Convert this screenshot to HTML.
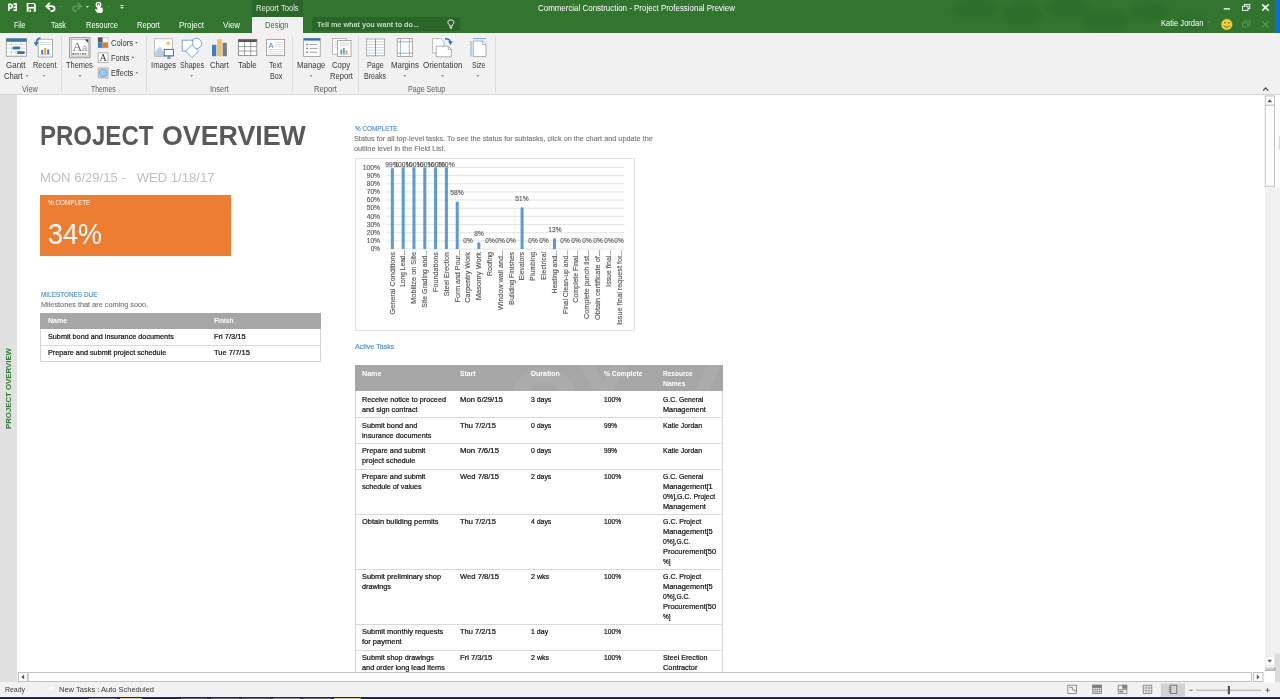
<!DOCTYPE html>
<html lang="en">
<head>
<meta charset="utf-8">
<title>Commercial Construction - Project Professional Preview</title>
<style>
html,body{margin:0;padding:0;background:#fff;}
body{width:1280px;height:699px;overflow:hidden;font-family:"Liberation Sans",sans-serif;}
#app{position:relative;width:1280px;height:699px;overflow:hidden;background:#fff;}
.t{position:absolute;white-space:nowrap;line-height:1;font-family:"Liberation Sans",sans-serif;}
.pre{white-space:pre;}
.ct{-webkit-text-stroke:0.22px #141414;}
.abs{position:absolute;}
#titlebar{position:absolute;left:0;top:0;width:1280px;height:32.5px;background:#31752f;}
#ctxtab{position:absolute;left:251.8px;top:0;width:51px;height:16.5px;background:#2a682a;}
#designtab{position:absolute;left:251.8px;top:16.5px;width:51px;height:16.5px;background:#f1f1f1;}
#tellme{position:absolute;left:312.2px;top:16.5px;width:147.5px;height:14.6px;background:#2a6529;}
#bluestrip{position:absolute;left:1275px;top:0;width:5px;height:32.5px;background:#0a6fd6;}
#ribbon{position:absolute;left:0;top:32.5px;width:1280px;height:61.5px;background:#f1f1f1;border-bottom:1px solid #d6d6d6;}
.sep{position:absolute;top:36px;width:1px;height:56px;background:#dcdcdc;}
#content{position:absolute;left:0;top:95px;width:1280px;height:577px;background:#fff;overflow:hidden;}
#sidebar{position:absolute;left:0;top:95px;width:16.7px;height:587.5px;background:#e1e1e1;}
#clip{position:absolute;left:0;top:0;width:1280px;height:672px;overflow:hidden;}
#vscroll{position:absolute;left:1264.6px;top:95px;width:15.4px;height:577px;background:#f1f1f1;}
#hscroll{position:absolute;left:16.7px;top:671.6px;width:1248px;height:10.8px;background:#f4f4f4;}
#status{position:absolute;left:0;top:682.4px;width:1280px;height:14.4px;background:#f1f1f1;}
#taskbar{position:absolute;left:0;top:696.6px;width:1280px;height:2.4px;background:#262449;}
#taskbar i{position:absolute;top:1.4px;height:1px;display:block;}
#orange{position:absolute;left:40.2px;top:194.5px;width:190.5px;height:61.5px;background:#ed7d31;}
.thead{position:absolute;background:#a6a6a6;}
.tbox{position:absolute;border:1px solid #d4d4d4;box-sizing:border-box;background:#fff;}
.hl{position:absolute;height:1px;background:#d9d9d9;}
#chartbox{position:absolute;left:355px;top:158px;width:280px;height:173px;border:1px solid #e0e0e0;box-sizing:border-box;background:#fff;}
.tl{position:absolute;left:0;top:0;width:1280px;height:699px;will-change:transform;}
svg{position:absolute;left:0;top:0;overflow:visible;}
</style>
</head>
<body>
<div id="app">
 <div id="clip">
 <!-- ===== report page ===== -->
 <div id="content"></div>
 <div id="orange"></div>
 <!-- milestones table -->
 <div class="tbox" style="left:40px;top:313px;width:281px;height:49px;"></div>
 <div class="thead" style="left:40px;top:313px;width:281px;height:15.7px;"></div>
 <div class="hl" style="left:40px;top:344.5px;width:281px;"></div>
 <!-- chart -->
 <div id="chartbox"></div>
 <!-- active tasks table -->
 <div class="tbox" style="left:355px;top:365px;width:368px;height:320px;"></div>
 <div class="thead" style="left:355px;top:365px;width:368px;height:26.2px;"></div>
 <div class="hl" style="left:355px;top:417.3px;width:368px;"></div>
 <div class="hl" style="left:355px;top:443px;width:368px;"></div>
 <div class="hl" style="left:355px;top:468.6px;width:368px;"></div>
 <div class="hl" style="left:355px;top:514px;width:368px;"></div>
 <div class="hl" style="left:355px;top:569px;width:368px;"></div>
 <div class="hl" style="left:355px;top:624px;width:368px;"></div>
 <div class="hl" style="left:355px;top:649.6px;width:368px;"></div>
 <svg width="1280" height="699" viewBox="0 0 1280 699" id="chartsvg">
<line x1="386.6" x2="624.6" y1="249.00" y2="249.00" stroke="#d9d9d9" stroke-width="0.7"/>
<line x1="386.6" x2="624.6" y1="240.84" y2="240.84" stroke="#d9d9d9" stroke-width="0.7"/>
<line x1="386.6" x2="624.6" y1="232.68" y2="232.68" stroke="#d9d9d9" stroke-width="0.7"/>
<line x1="386.6" x2="624.6" y1="224.52" y2="224.52" stroke="#d9d9d9" stroke-width="0.7"/>
<line x1="386.6" x2="624.6" y1="216.36" y2="216.36" stroke="#d9d9d9" stroke-width="0.7"/>
<line x1="386.6" x2="624.6" y1="208.20" y2="208.20" stroke="#d9d9d9" stroke-width="0.7"/>
<line x1="386.6" x2="624.6" y1="200.04" y2="200.04" stroke="#d9d9d9" stroke-width="0.7"/>
<line x1="386.6" x2="624.6" y1="191.88" y2="191.88" stroke="#d9d9d9" stroke-width="0.7"/>
<line x1="386.6" x2="624.6" y1="183.72" y2="183.72" stroke="#d9d9d9" stroke-width="0.7"/>
<line x1="386.6" x2="624.6" y1="175.56" y2="175.56" stroke="#d9d9d9" stroke-width="0.7"/>
<line x1="386.6" x2="624.6" y1="167.40" y2="167.40" stroke="#d9d9d9" stroke-width="0.7"/>
<rect x="390.85" y="168.22" width="3.0" height="80.78" fill="#5b9bd5"/>
<rect x="401.66" y="167.40" width="3.0" height="81.60" fill="#5b9bd5"/>
<rect x="412.47" y="167.40" width="3.0" height="81.60" fill="#5b9bd5"/>
<rect x="423.28" y="167.40" width="3.0" height="81.60" fill="#5b9bd5"/>
<rect x="434.09" y="167.40" width="3.0" height="81.60" fill="#5b9bd5"/>
<rect x="444.90" y="167.40" width="3.0" height="81.60" fill="#5b9bd5"/>
<rect x="455.71" y="201.67" width="3.0" height="47.33" fill="#5b9bd5"/>
<rect x="477.33" y="242.47" width="3.0" height="6.53" fill="#5b9bd5"/>
<rect x="520.57" y="207.38" width="3.0" height="41.62" fill="#5b9bd5"/>
<rect x="553.00" y="238.39" width="3.0" height="10.61" fill="#5b9bd5"/>
 <defs><clipPath id="wmclip"><rect x="355" y="365" width="368" height="26.2"/></clipPath></defs>
 <g clip-path="url(#wmclip)" fill="none" stroke="#ffffff" stroke-opacity="0.06">
  <circle cx="544" cy="401" r="26" stroke-width="15"/>
  <path d="M585 360 L603 396 L622 360" stroke-width="13"/>
  <path d="M700 396 L716 360" stroke-width="13"/>
 </g>
 </svg>
 <div class="tl">
<span class="t ct" id="t60" style="font-size:7.2px;color:#141414;left:361.70px;top:396.00px;transform-origin:0 50%;transform:scaleX(1.0107);">Receive notice to proceed</span>
<span class="t ct" id="t61" style="font-size:7.2px;color:#141414;left:361.70px;top:406.00px;transform-origin:0 50%;transform:scaleX(1.0155);">and sign contract</span>
<span class="t ct" id="t62" style="font-size:7.2px;color:#141414;left:459.90px;top:396.00px;transform-origin:0 50%;transform:scaleX(1.0708);">Mon 6/29/15</span>
<span class="t ct" id="t63" style="font-size:7.2px;color:#141414;left:531.30px;top:396.00px;transform-origin:0 50%;transform:scaleX(0.9581);">3 days</span>
<span class="t ct" id="t64" style="font-size:7.2px;color:#141414;left:604.00px;top:396.00px;transform-origin:0 50%;transform:scaleX(0.9353);">100%</span>
<span class="t ct" id="t65" style="font-size:7.2px;color:#141414;left:662.80px;top:396.00px;transform-origin:0 50%;transform:scaleX(0.9517);">G.C. General</span>
<span class="t ct" id="t66" style="font-size:7.2px;color:#141414;left:662.80px;top:406.00px;transform-origin:0 50%;transform:scaleX(1.0202);">Management</span>
<span class="t ct" id="t67" style="font-size:7.2px;color:#141414;left:361.70px;top:422.00px;transform-origin:0 50%;transform:scaleX(1.0173);">Submit bond and</span>
<span class="t ct" id="t68" style="font-size:7.2px;color:#141414;left:361.70px;top:432.00px;transform-origin:0 50%;transform:scaleX(1.0157);">insurance documents</span>
<span class="t ct" id="t69" style="font-size:7.2px;color:#141414;left:459.90px;top:422.00px;transform-origin:0 50%;transform:scaleX(1.0444);">Thu 7/2/15</span>
<span class="t ct" id="t70" style="font-size:7.2px;color:#141414;left:531.30px;top:422.00px;transform-origin:0 50%;transform:scaleX(0.9581);">0 days</span>
<span class="t ct" id="t71" style="font-size:7.2px;color:#141414;left:604.00px;top:422.00px;transform-origin:0 50%;transform:scaleX(0.9103);">99%</span>
<span class="t ct" id="t72" style="font-size:7.2px;color:#141414;left:662.80px;top:422.00px;transform-origin:0 50%;transform:scaleX(0.9663);">Katie Jordan</span>
<span class="t ct" id="t73" style="font-size:7.2px;color:#141414;left:361.70px;top:447.00px;transform-origin:0 50%;transform:scaleX(1.0106);">Prepare and submit</span>
<span class="t ct" id="t74" style="font-size:7.2px;color:#141414;left:361.70px;top:457.00px;transform-origin:0 50%;transform:scaleX(1.0202);">project schedule</span>
<span class="t ct" id="t75" style="font-size:7.2px;color:#141414;left:459.90px;top:447.00px;transform-origin:0 50%;transform:scaleX(1.0843);">Mon 7/6/15</span>
<span class="t ct" id="t76" style="font-size:7.2px;color:#141414;left:531.30px;top:447.00px;transform-origin:0 50%;transform:scaleX(0.9581);">0 days</span>
<span class="t ct" id="t77" style="font-size:7.2px;color:#141414;left:604.00px;top:447.00px;transform-origin:0 50%;transform:scaleX(0.9103);">99%</span>
<span class="t ct" id="t78" style="font-size:7.2px;color:#141414;left:662.80px;top:447.00px;transform-origin:0 50%;transform:scaleX(0.9663);">Katie Jordan</span>
<span class="t ct" id="t79" style="font-size:7.2px;color:#141414;left:361.70px;top:473.00px;transform-origin:0 50%;transform:scaleX(1.0106);">Prepare and submit</span>
<span class="t ct" id="t80" style="font-size:7.2px;color:#141414;left:361.70px;top:483.00px;transform-origin:0 50%;transform:scaleX(1.0026);">schedule of values</span>
<span class="t ct" id="t81" style="font-size:7.2px;color:#141414;left:459.90px;top:473.00px;transform-origin:0 50%;transform:scaleX(1.0644);">Wed 7/8/15</span>
<span class="t ct" id="t82" style="font-size:7.2px;color:#141414;left:531.30px;top:473.00px;transform-origin:0 50%;transform:scaleX(0.9581);">2 days</span>
<span class="t ct" id="t83" style="font-size:7.2px;color:#141414;left:604.00px;top:473.00px;transform-origin:0 50%;transform:scaleX(0.9353);">100%</span>
<span class="t ct" id="t84" style="font-size:7.2px;color:#141414;left:662.80px;top:473.00px;transform-origin:0 50%;transform:scaleX(0.9517);">G.C. General</span>
<span class="t ct" id="t85" style="font-size:7.2px;color:#141414;left:662.80px;top:483.00px;transform-origin:0 50%;transform:scaleX(1.0364);">Management[1</span>
<span class="t ct" id="t86" style="font-size:7.2px;color:#141414;left:662.80px;top:493.00px;transform-origin:0 50%;transform:scaleX(0.9751);">0%],G.C. Project</span>
<span class="t ct" id="t87" style="font-size:7.2px;color:#141414;left:662.80px;top:503.00px;transform-origin:0 50%;transform:scaleX(1.0202);">Management</span>
<span class="t ct" id="t88" style="font-size:7.2px;color:#141414;left:361.70px;top:518.00px;transform-origin:0 50%;transform:scaleX(1.0420);">Obtain building permits</span>
<span class="t ct" id="t89" style="font-size:7.2px;color:#141414;left:459.90px;top:518.00px;transform-origin:0 50%;transform:scaleX(1.0444);">Thu 7/2/15</span>
<span class="t ct" id="t90" style="font-size:7.2px;color:#141414;left:531.30px;top:518.00px;transform-origin:0 50%;transform:scaleX(0.9581);">4 days</span>
<span class="t ct" id="t91" style="font-size:7.2px;color:#141414;left:604.00px;top:518.00px;transform-origin:0 50%;transform:scaleX(0.9353);">100%</span>
<span class="t ct" id="t92" style="font-size:7.2px;color:#141414;left:662.80px;top:518.00px;transform-origin:0 50%;transform:scaleX(0.9730);">G.C. Project</span>
<span class="t ct" id="t93" style="font-size:7.2px;color:#141414;left:662.80px;top:528.00px;transform-origin:0 50%;transform:scaleX(1.0364);">Management[5</span>
<span class="t ct" id="t94" style="font-size:7.2px;color:#141414;left:662.80px;top:538.00px;transform-origin:0 50%;transform:scaleX(0.9324);">0%],G.C.</span>
<span class="t ct" id="t95" style="font-size:7.2px;color:#141414;left:662.80px;top:548.00px;transform-origin:0 50%;transform:scaleX(1.0383);">Procurement[50</span>
<span class="t ct" id="t96" style="font-size:7.2px;color:#141414;left:662.80px;top:558.00px;transform-origin:0 50%;transform:scaleX(0.8939);">%]</span>
<span class="t ct" id="t97" style="font-size:7.2px;color:#141414;left:361.70px;top:573.00px;transform-origin:0 50%;transform:scaleX(1.0245);">Submit preliminary shop</span>
<span class="t ct" id="t98" style="font-size:7.2px;color:#141414;left:361.70px;top:583.00px;transform-origin:0 50%;transform:scaleX(1.0081);">drawings</span>
<span class="t ct" id="t99" style="font-size:7.2px;color:#141414;left:459.90px;top:573.00px;transform-origin:0 50%;transform:scaleX(1.0644);">Wed 7/8/15</span>
<span class="t ct" id="t100" style="font-size:7.2px;color:#141414;left:531.30px;top:573.00px;transform-origin:0 50%;transform:scaleX(0.9850);">2 wks</span>
<span class="t ct" id="t101" style="font-size:7.2px;color:#141414;left:604.00px;top:573.00px;transform-origin:0 50%;transform:scaleX(0.9353);">100%</span>
<span class="t ct" id="t102" style="font-size:7.2px;color:#141414;left:662.80px;top:573.00px;transform-origin:0 50%;transform:scaleX(0.9730);">G.C. Project</span>
<span class="t ct" id="t103" style="font-size:7.2px;color:#141414;left:662.80px;top:583.00px;transform-origin:0 50%;transform:scaleX(1.0364);">Management[5</span>
<span class="t ct" id="t104" style="font-size:7.2px;color:#141414;left:662.80px;top:593.00px;transform-origin:0 50%;transform:scaleX(0.9324);">0%],G.C.</span>
<span class="t ct" id="t105" style="font-size:7.2px;color:#141414;left:662.80px;top:603.00px;transform-origin:0 50%;transform:scaleX(1.0383);">Procurement[50</span>
<span class="t ct" id="t106" style="font-size:7.2px;color:#141414;left:662.80px;top:613.00px;transform-origin:0 50%;transform:scaleX(0.8939);">%]</span>
<span class="t ct" id="t107" style="font-size:7.2px;color:#141414;left:361.70px;top:628.00px;transform-origin:0 50%;transform:scaleX(1.0271);">Submit monthly requests</span>
<span class="t ct" id="t108" style="font-size:7.2px;color:#141414;left:361.70px;top:638.00px;transform-origin:0 50%;transform:scaleX(1.0460);">for payment</span>
<span class="t ct" id="t109" style="font-size:7.2px;color:#141414;left:459.90px;top:628.00px;transform-origin:0 50%;transform:scaleX(1.0444);">Thu 7/2/15</span>
<span class="t ct" id="t110" style="font-size:7.2px;color:#141414;left:531.30px;top:628.00px;transform-origin:0 50%;transform:scaleX(0.9776);">1 day</span>
<span class="t ct" id="t111" style="font-size:7.2px;color:#141414;left:604.00px;top:628.00px;transform-origin:0 50%;transform:scaleX(0.9353);">100%</span>
<span class="t ct" id="t112" style="font-size:7.2px;color:#141414;left:361.70px;top:654.00px;transform-origin:0 50%;transform:scaleX(1.0167);">Submit shop drawings</span>
<span class="t ct" id="t113" style="font-size:7.2px;color:#141414;left:361.70px;top:664.00px;transform-origin:0 50%;transform:scaleX(1.0208);">and order long lead items</span>
<span class="t ct" id="t114" style="font-size:7.2px;color:#141414;left:459.90px;top:654.00px;transform-origin:0 50%;transform:scaleX(1.0601);">Fri 7/3/15</span>
<span class="t ct" id="t115" style="font-size:7.2px;color:#141414;left:531.30px;top:654.00px;transform-origin:0 50%;transform:scaleX(0.9850);">2 wks</span>
<span class="t ct" id="t116" style="font-size:7.2px;color:#141414;left:604.00px;top:654.00px;transform-origin:0 50%;transform:scaleX(0.9353);">100%</span>
<span class="t ct" id="t117" style="font-size:7.2px;color:#141414;left:662.80px;top:654.00px;transform-origin:0 50%;transform:scaleX(0.9922);">Steel Erection</span>
<span class="t ct" id="t118" style="font-size:7.2px;color:#141414;left:662.80px;top:664.00px;transform-origin:0 50%;transform:scaleX(1.0250);">Contractor</span>
 </div>
 </div>

 <div id="sidebar"></div>
 <div id="vscroll"></div>
 <div id="hscroll"></div>
 <div id="status"></div>
 <div id="taskbar">
  <i style="left:88.7px;width:28.3px;background:#6e6c86"></i><i style="left:119.8px;width:22px;background:#cfc878"></i>
  <i style="left:180.9px;width:26.5px;background:#5e5c78"></i><i style="left:211.4px;width:27.9px;background:#66647e"></i>
  <i style="left:242px;width:27.8px;background:#66647e"></i><i style="left:272.5px;width:27.9px;background:#8a889c"></i>
  <i style="left:303px;width:28px;background:#66647e"></i><i style="left:333.6px;width:27.9px;background:#cfc878"></i>
 </div>

 <div id="titlebar"></div>
 <div id="ctxtab"></div>
 <div id="designtab"></div>
 <div id="tellme"></div>
 <div id="bluestrip"></div>
 <div id="ribbon"></div>
 <div class="sep" style="left:61px"></div>
 <div class="sep" style="left:146px"></div>
 <div class="sep" style="left:292px"></div>
 <div class="sep" style="left:358px"></div>
 <div class="sep" style="left:495px"></div>

 <svg width="1280" height="699" viewBox="0 0 1280 699" id="icons">
<!-- title bar background texture -->
<defs><filter id="texblur" x="-20%" y="-50%" width="140%" height="200%"><feGaussianBlur stdDeviation="2.2"/></filter></defs>
<g fill="#1f5a1f" opacity="0.2" filter="url(#texblur)">
 <ellipse cx="975" cy="9" rx="22" ry="8"/>
 <ellipse cx="1022" cy="14" rx="20" ry="11"/>
 <ellipse cx="1068" cy="8" rx="22" ry="9"/>
 <ellipse cx="1105" cy="20" rx="24" ry="10"/>
 <ellipse cx="1150" cy="12" rx="20" ry="9"/>
 <ellipse cx="1190" cy="22" rx="16" ry="8"/>
</g>
<!-- ===== quick access toolbar ===== -->
<g id="qat" fill="none" stroke="#fff" stroke-width="1.1">
 <!-- project logo -->
 <path d="M8.9 11 V4.4 H10.4 Q12.2 4.4 12.2 6.2 Q12.2 8 10.4 8 H8.9" stroke-width="1.6"/>
 <rect x="13.6" y="3.2" width="3.3" height="7.9" fill="#fff" stroke="none"/>
 <rect x="13.6" y="5" width="2" height="1.3" fill="#31752f" stroke="none"/>
 <rect x="13.6" y="8" width="2" height="1.3" fill="#31752f" stroke="none"/>
 <!-- save -->
 <path d="M26.7 2.9 H34.4 L35.8 4.3 V11.8 H26.7 Z" fill="#fff" stroke="none"/>
 <rect x="28.3" y="4" width="5.6" height="2.9" fill="#31752f" stroke="none"/>
 <rect x="28.6" y="8.6" width="5.2" height="3.2" fill="#31752f" stroke="none"/>
 <rect x="29.4" y="9.6" width="1.6" height="2.2" fill="#fff" stroke="none"/>
 <!-- undo -->
 <path d="M46.6 6.2 H51.2 Q54.6 6.2 54.6 8.7 Q54.6 11 51.6 11 H50.6" stroke-width="1.8"/>
 <path d="M49.8 2.9 L46.4 6.2 L49.8 9.5" stroke-width="1.8"/>
 <path d="M59.4 5.9 h3 l-1.5 1.6 z" fill="#5f9a5d" stroke="none"/>
 <!-- redo (disabled) -->
 <g stroke="#5a9658">
  <path d="M81 6.2 H76.4 Q73 6.2 73 8.7 Q73 11 76 11 H77" stroke-width="1.8"/>
  <path d="M77.8 2.9 L81.2 6.2 L77.8 9.5" stroke-width="1.8"/>
 </g>
 <path d="M85.8 6 h3.2 l-1.6 1.8 z" fill="#fff" stroke="none"/>
 <!-- touch mode -->
 <circle cx="98.5" cy="4.7" r="2.3" stroke-width="1.3"/>
 <g fill="#fff" stroke="none">
  <rect x="97.5" y="4" width="2" height="6.4" rx="1"/>
  <path d="M97.5 7.6 H101.4 Q102.8 7.6 102.8 9 V11 Q102.8 13 100.8 13 H98.6 Q97.4 13 96.6 12 L94.9 9.6 Q95.4 8.6 96.5 9.3 L97.5 10.2 Z"/>
 </g>
 <path d="M107 5.9 h3 l-1.5 1.6 z" fill="#5f9a5d" stroke="none"/>
 <!-- customize -->
 <path d="M120.4 5.5 H123.6" stroke-width="1"/>
 <path d="M120.2 7 h3.6 l-1.8 2.1 z" fill="#fff" stroke="none"/>
</g>
<!-- tell-me bulb -->
<g fill="none" stroke="#fff" stroke-width="0.9">
 <path d="M449.4 26 V24.8 Q447.6 23.4 447.9 21.8 Q448.4 19.9 450.9 19.9 Q453.4 19.9 453.9 21.8 Q454.2 23.4 452.4 24.8 V26 Z"/>
 <path d="M449.6 27.4 H452.2 M450.2 28.6 H451.6"/>
</g>
<!-- ===== window controls ===== -->
<g fill="none" stroke="#fff">
 <path d="M1223.8 8.9 H1230" stroke-width="1.3"/>
 <rect x="1244.4" y="4.4" width="5.4" height="4.2" stroke-width="0.9"/>
 <rect x="1242.6" y="6.2" width="5.4" height="4.2" stroke-width="0.9" fill="#31752f"/>
 <path d="M1262.2 4.4 L1268.6 10.6 M1268.6 4.4 L1262.2 10.6" stroke-width="1.5"/>
</g>
<g fill="none" stroke="#5f9a5d">
 <rect x="1244.4" y="21" width="5.4" height="4.2" stroke-width="0.9"/>
 <rect x="1242.6" y="22.8" width="5.4" height="4.2" stroke-width="0.9" fill="#31752f"/>
 <path d="M1262.2 21.4 L1268.4 27.4 M1268.4 21.4 L1262.2 27.4" stroke-width="1.3"/>
 <path d="M1207.6 21.2 h2.8 l-1.4 1.5 z" fill="#5f9a5d" stroke="none"/>
</g>
<!-- smiley -->
<circle cx="1226.8" cy="24.4" r="5.4" fill="#f2d13a" stroke="#d9b320" stroke-width="0.5"/>
<circle cx="1224.9" cy="22.8" r="0.8" fill="#5a4a12"/>
<circle cx="1228.7" cy="22.8" r="0.8" fill="#5a4a12"/>
<path d="M1223.6 25.6 Q1226.8 28.8 1230 25.6" fill="none" stroke="#5a4a12" stroke-width="0.8"/>
<!-- ribbon collapse caret -->
<path d="M1263.2 90.6 L1265.7 87.9 L1268.2 90.6" fill="none" stroke="#4a4a4a" stroke-width="1.3"/>

<!-- ===== ribbon drop arrows ===== -->
<g fill="#666">
 <path d="M25.7 75.2 h2.8 l-1.4 1.6 z"/>
 <path d="M42.6 75.2 h2.8 l-1.4 1.6 z"/>
 <path d="M78.6 75.2 h2.8 l-1.4 1.6 z"/>
 <path d="M135.1 42 h2.8 l-1.4 1.6 z"/>
 <path d="M131.6 56.8 h2.8 l-1.4 1.6 z"/>
 <path d="M135.5 72.2 h2.8 l-1.4 1.6 z"/>
 <path d="M190.2 75.2 h2.8 l-1.4 1.6 z"/>
 <path d="M309.6 75.2 h2.8 l-1.4 1.6 z"/>
 <path d="M403.4 75.2 h2.8 l-1.4 1.6 z"/>
 <path d="M441.2 75.2 h2.8 l-1.4 1.6 z"/>
 <path d="M476.5 75.2 h2.8 l-1.4 1.6 z"/>
</g>

<!-- ===== ribbon icons ===== -->
<!-- Gantt Chart -->
<g>
 <rect x="6.3" y="38.6" width="20.2" height="17.6" fill="#fff" stroke="#8e8e8e" stroke-width="0.8"/>
 <rect x="6.3" y="38.6" width="20.2" height="3.2" fill="#2e75b6"/>
 <path d="M6.3 44.4 H26.5 M11.4 41.8 V56.2 M6.3 48.2 H26.5 M6.3 52.2 H26.5 M16 41.8 V56.2 M21 41.8 V56.2" stroke="#c9c9c9" stroke-width="0.6" fill="none"/>
 <rect x="12.6" y="46.6" width="7.4" height="2.8" fill="#2e75b6"/>
 <rect x="17.2" y="51.2" width="7.4" height="2.8" fill="#2e75b6"/>
</g>
<!-- Recent -->
<g>
 <rect x="38.2" y="39.2" width="14.2" height="17.8" fill="#fff" stroke="#9a9a9a" stroke-width="0.8"/>
 <path d="M40 42.6 H51 M40 44.6 H51" stroke="#cfcfcf" stroke-width="0.8"/>
 <rect x="41.2" y="50" width="2" height="4.6" fill="#3f7fbf"/>
 <rect x="44.2" y="48" width="2" height="6.6" fill="#e5a23c"/>
 <rect x="47.2" y="49.4" width="2" height="5.2" fill="#3f7fbf"/>
 <path d="M40 54.8 H51" stroke="#bdbdbd" stroke-width="0.6"/>
 <path d="M40.6 38.2 Q36.4 38 36.2 43.4" fill="none" stroke="#2e75b6" stroke-width="1.6"/>
 <path d="M33.6 42.2 L36.2 46.2 L38.8 42.2 Z" fill="#2e75b6"/>
</g>
<!-- Themes -->
<g>
 <rect x="69.6" y="37.6" width="20.4" height="20.2" fill="#e2e2e2" stroke="#8c8c8c" stroke-width="0.8"/>
 <rect x="71.4" y="39.4" width="16.8" height="16.6" fill="#fff" stroke="#a0a0a0" stroke-width="0.6"/>
 <path d="M84.6 39.4 H88.2 V43 Z" fill="#444"/>
 <text x="72.4" y="51.4" font-family="Liberation Serif, serif" font-size="13.5" fill="#6e6e6e">A</text>
 <text x="82" y="51.4" font-family="Liberation Sans, sans-serif" font-size="9.5" fill="#8a93a8">a</text>
 <g>
  <rect x="72.4" y="53" width="1.8" height="1.8" fill="#3f6fb5"/><rect x="74.8" y="53" width="1.8" height="1.8" fill="#d9822b"/>
  <rect x="77.2" y="53" width="1.8" height="1.8" fill="#9a9a9a"/><rect x="79.6" y="53" width="1.8" height="1.8" fill="#e3b92f"/>
  <rect x="82" y="53" width="1.8" height="1.8" fill="#5b9bd5"/><rect x="84.4" y="53" width="1.8" height="1.8" fill="#70ad47"/>
 </g>
</g>
<!-- Colors -->
<g>
 <rect x="98" y="37.4" width="10" height="10.4" fill="#f6f6f6" stroke="#b5b5b5" stroke-width="0.5"/>
 <rect x="98" y="37.4" width="4.6" height="5" fill="#595959"/>
 <rect x="98" y="42.4" width="4.6" height="5.4" fill="#3f7fc1"/>
 <rect x="102.6" y="42.4" width="5.4" height="5.4" fill="#e8762c"/>
</g>
<!-- Fonts -->
<g>
 <rect x="98.2" y="52.8" width="9.8" height="9.8" fill="#fff" stroke="#a6a6a6" stroke-width="0.8"/>
 <text x="103.1" y="61.2" text-anchor="middle" font-family="Liberation Serif, serif" font-size="10" fill="#333">A</text>
</g>
<!-- Effects -->
<g>
 <rect x="98.2" y="68" width="9.8" height="10" fill="#dcdcdc" stroke="#a6a6a6" stroke-width="0.8"/>
 <circle cx="103.1" cy="73" r="3.9" fill="#9fc6ee" stroke="#5b9bd5" stroke-width="0.7"/>
</g>
<!-- Images -->
<g>
 <rect x="154.4" y="38.8" width="18" height="17.6" fill="#fff" stroke="#b0b0b0" stroke-width="0.8"/>
 <path d="M155 56 L155 52 L160 46.6 L166 56 Z" fill="#b9cfe8"/>
 <circle cx="168.2" cy="43.2" r="1.7" fill="#f0c24a"/>
 <rect x="164.2" y="49.4" width="9.2" height="6.4" fill="#fff" stroke="#2e75b6" stroke-width="1"/>
 <path d="M167 58.2 H170.8 M168.9 55.8 V58.2" stroke="#2e75b6" stroke-width="0.9"/>
</g>
<!-- Shapes -->
<g fill="#fff" stroke="#6b9bd0" stroke-width="0.9">
 <circle cx="196.4" cy="43.4" r="5.2"/>
 <rect x="182.2" y="40.2" width="10.6" height="10.8"/>
 <path d="M192 44.6 L198.6 51.2 L192 57.6 L185.6 51.2 Z"/>
</g>
<!-- Chart -->
<g>
 <rect x="212" y="44.8" width="4.3" height="11.4" fill="#3f7fc1"/>
 <rect x="217.1" y="39.2" width="4.7" height="17" fill="#f0c060"/>
 <rect x="222.6" y="42.8" width="4.3" height="13.4" fill="#7a7a7a"/>
</g>
<!-- Table -->
<g>
 <rect x="238.4" y="39.4" width="18.4" height="16.2" fill="#fff" stroke="#8a8a8a" stroke-width="0.9"/>
 <rect x="238.4" y="39.4" width="18.4" height="2.6" fill="#555"/>
 <path d="M238.4 46.6 H256.8 M238.4 51 H256.8 M244.6 42 V55.6 M250.8 42 V55.6" stroke="#8a8a8a" stroke-width="0.8" fill="none"/>
</g>
<!-- Text Box -->
<g>
 <rect x="266.6" y="39.4" width="18" height="16.2" fill="#fff" stroke="#9a9a9a" stroke-width="0.9"/>
 <text x="268.4" y="47.6" font-family="Liberation Sans, sans-serif" font-size="7.6" fill="#3f7fc1">A</text>
 <path d="M275.4 42.4 H283 M275.4 44.6 H283 M275.4 46.8 H283 M268.6 49.6 H283 M268.6 51.8 H283 M268.6 53.8 H283" stroke="#cfcfcf" stroke-width="0.7"/>
</g>
<!-- Manage -->
<g>
 <rect x="303.6" y="38.6" width="16.6" height="17.8" fill="#fff" stroke="#9a9a9a" stroke-width="0.8"/>
 <rect x="303.6" y="38.2" width="16.6" height="2.4" fill="#2e75b6"/>
 <g fill="#7a7a7a"><rect x="306.2" y="43.8" width="1.6" height="1.6"/><rect x="306.2" y="47.6" width="1.6" height="1.6"/><rect x="306.2" y="51.4" width="1.6" height="1.6"/></g>
 <path d="M309.4 44.6 H317.6 M309.4 48.4 H317.6 M309.4 52.2 H317.6" stroke="#8a8a8a" stroke-width="0.8"/>
</g>
<!-- Copy Report -->
<g>
 <rect x="332.4" y="38.6" width="13.8" height="15.6" fill="#fff" stroke="#a8a8a8" stroke-width="0.8"/>
 <path d="M334.4 42 H337 M334.4 44.6 H337 M334.4 47.4 H337" stroke="#c8c8c8" stroke-width="0.8"/>
 <rect x="337.6" y="40.4" width="13.4" height="16.2" fill="#fff" stroke="#9a9a9a" stroke-width="0.8"/>
 <path d="M339.4 43.2 H349 M339.4 45.2 H349" stroke="#c8c8c8" stroke-width="0.8"/>
 <rect x="340.4" y="49.6" width="1.8" height="4.6" fill="#5b9bd5"/><rect x="343" y="48" width="1.8" height="6.2" fill="#7a9cc0"/><rect x="345.6" y="50.4" width="1.8" height="3.8" fill="#e5a23c"/>
 <path d="M339.4 54.4 H349" stroke="#bdbdbd" stroke-width="0.6"/>
</g>
<!-- Page Breaks -->
<g>
 <rect x="366.4" y="39" width="18.2" height="16.8" fill="#fff" stroke="#9a9a9a" stroke-width="0.8"/>
 <path d="M366.4 41.8 H384.6 M366.4 44.6 H384.6 M366.4 47.4 H384.6 M366.4 50.2 H384.6 M366.4 53 H384.6" stroke="#b9c5d6" stroke-width="0.7"/>
 <path d="M375.5 39 V55.8" stroke="#8a8a8a" stroke-width="0.9"/>
</g>
<!-- Margins -->
<g>
 <rect x="397.2" y="38.6" width="15.4" height="17.8" fill="#fff" stroke="#9a9a9a" stroke-width="0.8"/>
 <path d="M400.4 38.6 V56.4 M409.4 38.6 V56.4 M397.2 41.8 H412.6 M397.2 53.2 H412.6" stroke="#7f9fc6" stroke-width="0.8"/>
</g>
<!-- Orientation -->
<g>
 <path d="M432.6 38.6 H440.6 L444 42 V53 H432.6 Z" fill="#fff" stroke="#a8a8a8" stroke-width="0.8"/>
 <path d="M436.2 46.2 H448.2 L451.4 49.4 V56.8 H436.2 Z" fill="#fff" stroke="#9a9a9a" stroke-width="0.8"/>
 <path d="M448.2 46.2 V49.4 H451.4" fill="none" stroke="#9a9a9a" stroke-width="0.7"/>
 <path d="M445 38.8 Q450 38.6 450.4 42.6" fill="none" stroke="#2e75b6" stroke-width="1.4"/>
 <path d="M448 41.6 L450.6 45 L452.8 41.2 Z" fill="#2e75b6"/>
</g>
<!-- Size -->
<g>
 <path d="M473.2 41 H482.4 L486 44.6 V56.6 H473.2 Z" fill="#fff" stroke="#9a9a9a" stroke-width="0.8"/>
 <path d="M482.4 41 V44.6 H486" fill="none" stroke="#9a9a9a" stroke-width="0.7"/>
 <path d="M473 38.6 H486.2 M471 41 V56.6" stroke="#5b9bd5" stroke-width="0.8"/>
</g>

<!-- ===== scrollbars ===== -->
<rect x="1275" y="95" width="5" height="91.4" fill="#fff"/>
<rect x="1275" y="653.6" width="5" height="28.6" fill="#dcdcdc"/>
<rect x="1264.6" y="671" width="10.4" height="11.4" fill="#fff"/>
<g fill="#fff" stroke="#b4b4b4" stroke-width="0.8">
 <rect x="1265.2" y="96" width="9.2" height="9.2"/>
 <rect x="1265.2" y="105.2" width="9.2" height="81"/>
 <rect x="18.4" y="672.5" width="8.8" height="9"/>
 <rect x="28.2" y="672.5" width="1223.2" height="9"/>
 <rect x="1253.4" y="672.5" width="9.6" height="9"/>
</g>
<rect x="1265" y="656.4" width="9.4" height="8.6" fill="#fff" stroke="#e2e2e2" stroke-width="0.6"/>
<rect x="1264.8" y="667.4" width="10.2" height="3" fill="#d6d6d6"/>
<path d="M1264.8 670.2 H1275 V667.4" fill="none" stroke="#8e8e8e" stroke-width="0.8"/>
<g fill="#5a5a5a">
 <path d="M1267.2 102.2 h5 l-2.5 -3 z"/>
 <path d="M1267.4 659.8 h4.6 l-2.3 2.7 z"/>
 <path d="M24.2 674.6 v4.8 l-2.9 -2.4 z"/>
 <path d="M1256.8 674.6 v4.8 l2.9 -2.4 z"/>
</g>
<rect x="1278.6" y="136" width="1.4" height="14" fill="#dcdcdc"/>

<!-- ===== status bar icons ===== -->
<rect x="1160.8" y="683.4" width="24.2" height="13.2" fill="#d2d2d2"/>
<g fill="none" stroke="#7c7c7c" stroke-width="0.8">
 <rect x="1067.8" y="685.2" width="8.6" height="8.2"/>
 <path d="M1069.2 687.4 H1072.4 V690 H1075 V692" />
 <rect x="1092.8" y="685.2" width="8.8" height="8.2"/>
 <path d="M1092.8 687.6 H1101.6 M1095 687.6 V693.4 M1097.2 687.6 V693.4 M1099.4 687.6 V693.4 M1092.8 689.6 H1101.6 M1092.8 691.6 H1101.6" stroke-width="0.6"/>
 <rect x="1092.8" y="685.2" width="8.8" height="2.2" fill="#7c7c7c"/>
 <rect x="1118.2" y="685.2" width="8.6" height="8.2"/>
 <rect x="1122.8" y="685.2" width="4" height="3" fill="#7c7c7c"/>
 <path d="M1118.2 689.6 H1126.8" />
 <rect x="1119.4" y="690.8" width="4" height="1.6" fill="#7c7c7c" stroke="none"/>
 <rect x="1143.2" y="685.2" width="8.6" height="8.2"/>
 <path d="M1146.1 685.2 V693.4 M1149 685.2 V693.4 M1143.2 688 H1151.8 M1143.2 690.8 H1151.8" stroke-width="0.6"/>
 <rect x="1170.2" y="685.2" width="6.6" height="8.2" stroke="#666"/>
 <path d="M1168.8 687.2 H1171.4 M1168.8 689.4 H1171.4 M1168.8 691.6 H1171.4" stroke="#666"/>
</g>
<path d="M1189.4 690.2 H1192.6" stroke="#666" stroke-width="1"/>
<path d="M1196 690.2 H1261" stroke="#8a8a8a" stroke-width="0.7"/>
<rect x="1227.8" y="686" width="2.2" height="8.2" fill="#555"/>
<path d="M1265.4 690.2 H1269.8 M1267.6 688 V692.4" stroke="#666" stroke-width="1"/>
<!-- small status icon -->
<path d="M48 686 H55.6 V691 H50.4 V693.6 L48 691 Z" fill="#fafafa" stroke="#e2e2e2" stroke-width="0.5"/>

 </svg>

<div class="tl">
<span class="t " id="t0" style="font-size:8.4px;color:#ffffff;left:538.00px;top:4.00px;transform-origin:0 50%;transform:scaleX(0.9468);">Commercial Construction - Project Professional Preview</span>
<span class="t " id="t1" style="font-size:8.4px;color:#e3ece2;left:256.00px;top:4.00px;transform-origin:0 50%;transform:scaleX(0.9109);">Report Tools</span>
<span class="t " id="t2" style="font-size:8.4px;color:#ffffff;left:13.50px;top:21.00px;transform-origin:0 50%;transform:scaleX(0.8519);">File</span>
<span class="t " id="t3" style="font-size:8.4px;color:#ffffff;left:51.00px;top:21.00px;transform-origin:0 50%;transform:scaleX(0.8711);">Task</span>
<span class="t " id="t4" style="font-size:8.4px;color:#ffffff;left:86.00px;top:21.00px;transform-origin:0 50%;transform:scaleX(0.8928);">Resource</span>
<span class="t " id="t5" style="font-size:8.4px;color:#ffffff;left:137.00px;top:21.00px;transform-origin:0 50%;transform:scaleX(0.9149);">Report</span>
<span class="t " id="t6" style="font-size:8.4px;color:#ffffff;left:179.00px;top:21.00px;transform-origin:0 50%;transform:scaleX(0.9587);">Project</span>
<span class="t " id="t7" style="font-size:8.4px;color:#ffffff;left:223.00px;top:21.00px;transform-origin:0 50%;transform:scaleX(0.9436);">View</span>
<span class="t " id="t8" style="font-size:8.4px;color:#31752f;left:265.30px;top:21.00px;transform-origin:0 50%;transform:scaleX(0.9011);">Design</span>
<span class="t " id="t9" style="font-size:7.4px;color:#c4dcc2;font-weight:700;left:316.90px;top:21.00px;transform-origin:0 50%;transform:scaleX(0.9792);">Tell me what you want to do...</span>
<span class="t " id="t10" style="font-size:8.4px;color:#ffffff;left:1160.50px;top:19.00px;transform-origin:0 50%;transform:scaleX(0.9037);">Katie Jordan</span>
<span class="t " id="t11" style="font-size:8.4px;color:#383838;left:6.25px;top:61.00px;transform-origin:0 50%;transform:scaleX(0.9519);">Gantt</span>
<span class="t " id="t12" style="font-size:8.4px;color:#383838;left:4.10px;top:72.00px;transform-origin:0 50%;transform:scaleX(0.9153);">Chart</span>
<span class="t " id="t13" style="font-size:8.4px;color:#383838;left:32.80px;top:61.00px;transform-origin:0 50%;transform:scaleX(0.8833);">Recent</span>
<span class="t " id="t14" style="font-size:8.4px;color:#383838;left:66.40px;top:61.00px;transform-origin:0 50%;transform:scaleX(0.8855);">Themes</span>
<span class="t " id="t15" style="font-size:8.4px;color:#383838;left:110.75px;top:39.00px;transform-origin:0 50%;transform:scaleX(0.9110);">Colors</span>
<span class="t " id="t16" style="font-size:8.4px;color:#383838;left:110.75px;top:54.00px;transform-origin:0 50%;transform:scaleX(0.8853);">Fonts</span>
<span class="t " id="t17" style="font-size:8.4px;color:#383838;left:110.75px;top:69.00px;transform-origin:0 50%;transform:scaleX(0.8742);">Effects</span>
<span class="t " id="t18" style="font-size:8.4px;color:#5e5e5e;left:22.30px;top:85.00px;transform-origin:0 50%;transform:scaleX(0.8770);">View</span>
<span class="t " id="t19" style="font-size:8.4px;color:#5e5e5e;left:91.40px;top:85.00px;transform-origin:0 50%;transform:scaleX(0.8128);">Themes</span>
<span class="t " id="t20" style="font-size:8.4px;color:#383838;left:150.60px;top:61.00px;transform-origin:0 50%;transform:scaleX(0.9138);">Images</span>
<span class="t " id="t21" style="font-size:8.4px;color:#383838;left:179.60px;top:61.00px;transform-origin:0 50%;transform:scaleX(0.8449);">Shapes</span>
<span class="t " id="t22" style="font-size:8.4px;color:#383838;left:210.00px;top:61.00px;transform-origin:0 50%;transform:scaleX(0.9178);">Chart</span>
<span class="t " id="t23" style="font-size:8.4px;color:#383838;left:238.20px;top:61.00px;transform-origin:0 50%;transform:scaleX(0.9335);">Table</span>
<span class="t " id="t24" style="font-size:8.4px;color:#383838;left:269.20px;top:61.00px;transform-origin:0 50%;transform:scaleX(0.8529);">Text</span>
<span class="t " id="t25" style="font-size:8.4px;color:#383838;left:269.50px;top:72.00px;transform-origin:0 50%;transform:scaleX(0.8589);">Box</span>
<span class="t " id="t26" style="font-size:8.4px;color:#5e5e5e;left:210.00px;top:85.00px;transform-origin:0 50%;transform:scaleX(0.8972);">Insert</span>
<span class="t " id="t27" style="font-size:8.4px;color:#383838;left:296.90px;top:61.00px;transform-origin:0 50%;transform:scaleX(0.9384);">Manage</span>
<span class="t " id="t28" style="font-size:8.4px;color:#383838;left:332.30px;top:61.00px;transform-origin:0 50%;transform:scaleX(0.9252);">Copy</span>
<span class="t " id="t29" style="font-size:8.4px;color:#383838;left:329.90px;top:72.00px;transform-origin:0 50%;transform:scaleX(0.9069);">Report</span>
<span class="t " id="t30" style="font-size:8.4px;color:#5e5e5e;left:313.80px;top:85.00px;transform-origin:0 50%;transform:scaleX(0.9149);">Report</span>
<span class="t " id="t31" style="font-size:8.4px;color:#383838;left:367.10px;top:61.00px;transform-origin:0 50%;transform:scaleX(0.8537);">Page</span>
<span class="t " id="t32" style="font-size:8.4px;color:#383838;left:364.20px;top:72.00px;transform-origin:0 50%;transform:scaleX(0.8475);">Breaks</span>
<span class="t " id="t33" style="font-size:8.4px;color:#383838;left:390.90px;top:61.00px;transform-origin:0 50%;transform:scaleX(0.9363);">Margins</span>
<span class="t " id="t34" style="font-size:8.4px;color:#383838;left:422.90px;top:61.00px;transform-origin:0 50%;transform:scaleX(0.9617);">Orientation</span>
<span class="t " id="t35" style="font-size:8.4px;color:#383838;left:471.80px;top:61.00px;transform-origin:0 50%;transform:scaleX(0.8222);">Size</span>
<span class="t " id="t36" style="font-size:8.4px;color:#5e5e5e;left:407.80px;top:85.00px;transform-origin:0 50%;transform:scaleX(0.8497);">Page Setup</span>
<span class="t " id="t37" style="font-size:27.6px;color:#595959;font-weight:700;left:40.00px;top:122.00px;transform-origin:0 50%;transform:scaleX(0.8700);">PROJECT</span>
<span class="t " id="t38" style="font-size:27.6px;color:#595959;font-weight:700;left:162.40px;top:122.00px;transform-origin:0 50%;transform:scaleX(0.9708);">OVERVIEW</span>
<span class="t pre" id="t39" style="font-size:13.3px;color:#bfbfbf;left:40.00px;top:171.00px;transform-origin:0 50%;transform:scaleX(0.9838);">MON 6/29/15 -   WED 1/18/17</span>
<span class="t " id="t40" style="font-size:6.6px;color:#ffffff;left:47.70px;top:200.00px;transform-origin:0 50%;transform:scaleX(0.9620);">% COMPLETE</span>
<span class="t " id="t41" style="font-size:29px;color:#ffffff;left:47.70px;top:220.00px;transform-origin:0 50%;transform:scaleX(0.9303);">34%</span>
<span class="t " id="t42" style="font-size:7.7px;color:#4b8fd0;-webkit-text-stroke:0.15px #4b8fd0;left:40.90px;top:291.00px;transform-origin:0 50%;transform:scaleX(0.8321);">MILESTONES DUE</span>
<span class="t " id="t43" style="font-size:7.2px;color:#757575;-webkit-text-stroke:0.12px #757575;left:40.90px;top:301.00px;transform-origin:0 50%;transform:scaleX(1.0163);">Milestones that are coming soon.</span>
<span class="t " id="t44" style="font-size:7.2px;color:#ffffff;font-weight:700;left:47.60px;top:317.00px;transform-origin:0 50%;transform:scaleX(0.9807);">Name</span>
<span class="t " id="t45" style="font-size:7.2px;color:#ffffff;font-weight:700;left:214.40px;top:317.00px;transform-origin:0 50%;transform:scaleX(0.9210);">Finish</span>
<span class="t " id="t46" style="font-size:7.2px;color:#141414;-webkit-text-stroke:0.22px #141414;left:47.60px;top:333.00px;transform-origin:0 50%;transform:scaleX(1.0090);">Submit bond and insurance documents</span>
<span class="t " id="t47" style="font-size:7.2px;color:#141414;-webkit-text-stroke:0.22px #141414;left:214.40px;top:333.00px;transform-origin:0 50%;transform:scaleX(1.0436);">Fri 7/3/15</span>
<span class="t " id="t48" style="font-size:7.2px;color:#141414;-webkit-text-stroke:0.22px #141414;left:47.60px;top:349.00px;transform-origin:0 50%;transform:scaleX(1.0104);">Prepare and submit project schedule</span>
<span class="t " id="t49" style="font-size:7.2px;color:#141414;-webkit-text-stroke:0.22px #141414;left:214.40px;top:349.00px;transform-origin:0 50%;transform:scaleX(1.0525);">Tue 7/7/15</span>
<span class="t " id="t50" style="font-size:7.2px;color:#4b8fd0;-webkit-text-stroke:0.15px #4b8fd0;left:354.60px;top:125.00px;transform-origin:0 50%;transform:scaleX(0.8887);">% COMPLETE</span>
<span class="t " id="t51" style="font-size:7.2px;color:#757575;-webkit-text-stroke:0.12px #757575;left:354.40px;top:135.00px;transform-origin:0 50%;transform:scaleX(1.0138);">Status for all top-level tasks. To see the status for subtasks, click on the chart and update the</span>
<span class="t " id="t52" style="font-size:7.2px;color:#757575;-webkit-text-stroke:0.12px #757575;left:354.40px;top:145.00px;transform-origin:0 50%;transform:scaleX(1.0133);">outline level in the Field List.</span>
<span class="t " id="t53" style="font-size:7.2px;color:#4b8fd0;-webkit-text-stroke:0.15px #4b8fd0;left:354.70px;top:343.00px;transform-origin:0 50%;transform:scaleX(0.9871);">Active Tasks</span>
<span class="t " id="t54" style="font-size:7.2px;color:#ffffff;font-weight:700;left:361.70px;top:370.00px;transform-origin:0 50%;transform:scaleX(0.9909);">Name</span>
<span class="t " id="t55" style="font-size:7.2px;color:#ffffff;font-weight:700;left:459.90px;top:370.00px;transform-origin:0 50%;transform:scaleX(0.9518);">Start</span>
<span class="t " id="t56" style="font-size:7.2px;color:#ffffff;font-weight:700;left:531.30px;top:370.00px;transform-origin:0 50%;transform:scaleX(0.9730);">Duration</span>
<span class="t " id="t57" style="font-size:7.2px;color:#ffffff;font-weight:700;left:604.00px;top:370.00px;transform-origin:0 50%;transform:scaleX(0.9334);">% Complete</span>
<span class="t " id="t58" style="font-size:7.2px;color:#ffffff;font-weight:700;left:662.80px;top:370.00px;transform-origin:0 50%;transform:scaleX(0.9064);">Resource</span>
<span class="t " id="t59" style="font-size:7.2px;color:#ffffff;font-weight:700;left:662.80px;top:380.00px;transform-origin:0 50%;transform:scaleX(0.9543);">Names</span>
<span class="t " id="t119" style="font-size:7.2px;color:#595959;-webkit-text-stroke:0.15px #595959;left:379.50px;top:164.00px;transform-origin:100% 50%;transform:translateX(-100%) scaleX(0.9407);">100%</span>
<span class="t " id="t120" style="font-size:7.2px;color:#595959;-webkit-text-stroke:0.15px #595959;left:379.50px;top:172.00px;transform-origin:100% 50%;transform:translateX(-100%) scaleX(0.9242);">90%</span>
<span class="t " id="t121" style="font-size:7.2px;color:#595959;-webkit-text-stroke:0.15px #595959;left:379.50px;top:180.00px;transform-origin:100% 50%;transform:translateX(-100%) scaleX(0.9242);">80%</span>
<span class="t " id="t122" style="font-size:7.2px;color:#595959;-webkit-text-stroke:0.15px #595959;left:379.50px;top:188.00px;transform-origin:100% 50%;transform:translateX(-100%) scaleX(0.9242);">70%</span>
<span class="t " id="t123" style="font-size:7.2px;color:#595959;-webkit-text-stroke:0.15px #595959;left:379.50px;top:196.00px;transform-origin:100% 50%;transform:translateX(-100%) scaleX(0.9242);">60%</span>
<span class="t " id="t124" style="font-size:7.2px;color:#595959;-webkit-text-stroke:0.15px #595959;left:379.50px;top:204.00px;transform-origin:100% 50%;transform:translateX(-100%) scaleX(0.9242);">50%</span>
<span class="t " id="t125" style="font-size:7.2px;color:#595959;-webkit-text-stroke:0.15px #595959;left:379.50px;top:213.00px;transform-origin:100% 50%;transform:translateX(-100%) scaleX(0.9242);">40%</span>
<span class="t " id="t126" style="font-size:7.2px;color:#595959;-webkit-text-stroke:0.15px #595959;left:379.50px;top:221.00px;transform-origin:100% 50%;transform:translateX(-100%) scaleX(0.9242);">30%</span>
<span class="t " id="t127" style="font-size:7.2px;color:#595959;-webkit-text-stroke:0.15px #595959;left:379.50px;top:229.00px;transform-origin:100% 50%;transform:translateX(-100%) scaleX(0.9242);">20%</span>
<span class="t " id="t128" style="font-size:7.2px;color:#595959;-webkit-text-stroke:0.15px #595959;left:379.50px;top:237.00px;transform-origin:100% 50%;transform:translateX(-100%) scaleX(0.9242);">10%</span>
<span class="t " id="t129" style="font-size:7.2px;color:#595959;-webkit-text-stroke:0.15px #595959;left:379.50px;top:245.00px;transform-origin:100% 50%;transform:translateX(-100%) scaleX(0.8950);">0%</span>
<span class="t " id="t130" style="font-size:7.2px;color:#595959;-webkit-text-stroke:0.15px #595959;left:392.35px;top:161.00px;transform-origin:50% 50%;transform:translateX(-50%) scaleX(0.9242);">99%</span>
<span class="t " id="t131" style="font-size:7.4px;color:#595959;-webkit-text-stroke:0.15px #595959;left:392.65px;top:252.40px;transform-origin:0 0;transform:rotate(-90deg) translate(-100%,-50%);"><span style="display:inline-block;transform-origin:100% 50%;transform:scaleX(0.9877)">General Conditions</span></span>
<span class="t " id="t132" style="font-size:7.2px;color:#595959;-webkit-text-stroke:0.15px #595959;left:403.16px;top:161.00px;transform-origin:50% 50%;transform:translateX(-50%) scaleX(0.9407);">100%</span>
<span class="t " id="t133" style="font-size:7.4px;color:#595959;-webkit-text-stroke:0.15px #595959;left:403.46px;top:249.80px;transform-origin:0 0;transform:rotate(-90deg) translate(-100%,-50%);"><span style="display:inline-block;transform-origin:100% 50%;transform:scaleX(0.8927)">Long Lead...</span></span>
<span class="t " id="t134" style="font-size:7.2px;color:#595959;-webkit-text-stroke:0.15px #595959;left:413.97px;top:161.00px;transform-origin:50% 50%;transform:translateX(-50%) scaleX(0.9407);">100%</span>
<span class="t " id="t135" style="font-size:7.4px;color:#595959;-webkit-text-stroke:0.15px #595959;left:414.27px;top:252.40px;transform-origin:0 0;transform:rotate(-90deg) translate(-100%,-50%);"><span style="display:inline-block;transform-origin:100% 50%;transform:scaleX(0.9929)">Mobilize on Site</span></span>
<span class="t " id="t136" style="font-size:7.2px;color:#595959;-webkit-text-stroke:0.15px #595959;left:424.78px;top:161.00px;transform-origin:50% 50%;transform:translateX(-50%) scaleX(0.9407);">100%</span>
<span class="t " id="t137" style="font-size:7.4px;color:#595959;-webkit-text-stroke:0.15px #595959;left:425.08px;top:249.80px;transform-origin:0 0;transform:rotate(-90deg) translate(-100%,-50%);"><span style="display:inline-block;transform-origin:100% 50%;transform:scaleX(0.9377)">Site Grading and...</span></span>
<span class="t " id="t138" style="font-size:7.2px;color:#595959;-webkit-text-stroke:0.15px #595959;left:435.59px;top:161.00px;transform-origin:50% 50%;transform:translateX(-50%) scaleX(0.9407);">100%</span>
<span class="t " id="t139" style="font-size:7.4px;color:#595959;-webkit-text-stroke:0.15px #595959;left:435.89px;top:252.40px;transform-origin:0 0;transform:rotate(-90deg) translate(-100%,-50%);"><span style="display:inline-block;transform-origin:100% 50%;transform:scaleX(0.9831)">Foundations</span></span>
<span class="t " id="t140" style="font-size:7.2px;color:#595959;-webkit-text-stroke:0.15px #595959;left:446.40px;top:161.00px;transform-origin:50% 50%;transform:translateX(-50%) scaleX(0.9407);">100%</span>
<span class="t " id="t141" style="font-size:7.4px;color:#595959;-webkit-text-stroke:0.15px #595959;left:446.70px;top:252.40px;transform-origin:0 0;transform:rotate(-90deg) translate(-100%,-50%);"><span style="display:inline-block;transform-origin:100% 50%;transform:scaleX(0.9627)">Steel Erection</span></span>
<span class="t " id="t142" style="font-size:7.2px;color:#595959;-webkit-text-stroke:0.15px #595959;left:457.21px;top:189.00px;transform-origin:50% 50%;transform:translateX(-50%) scaleX(0.9242);">58%</span>
<span class="t " id="t143" style="font-size:7.4px;color:#595959;-webkit-text-stroke:0.15px #595959;left:457.51px;top:249.80px;transform-origin:0 0;transform:rotate(-90deg) translate(-100%,-50%);"><span style="display:inline-block;transform-origin:100% 50%;transform:scaleX(0.9501)">Form and Pour...</span></span>
<span class="t " id="t144" style="font-size:7.2px;color:#595959;-webkit-text-stroke:0.15px #595959;left:468.02px;top:237.00px;transform-origin:50% 50%;transform:translateX(-50%) scaleX(0.8950);">0%</span>
<span class="t " id="t145" style="font-size:7.4px;color:#595959;-webkit-text-stroke:0.15px #595959;left:468.32px;top:252.40px;transform-origin:0 0;transform:rotate(-90deg) translate(-100%,-50%);"><span style="display:inline-block;transform-origin:100% 50%;transform:scaleX(0.9840)">Carpentry Work</span></span>
<span class="t " id="t146" style="font-size:7.2px;color:#595959;-webkit-text-stroke:0.15px #595959;left:478.83px;top:230.00px;transform-origin:50% 50%;transform:translateX(-50%) scaleX(0.8950);">8%</span>
<span class="t " id="t147" style="font-size:7.4px;color:#595959;-webkit-text-stroke:0.15px #595959;left:479.13px;top:252.40px;transform-origin:0 0;transform:rotate(-90deg) translate(-100%,-50%);"><span style="display:inline-block;transform-origin:100% 50%;transform:scaleX(1.0144)">Masonry Work</span></span>
<span class="t " id="t148" style="font-size:7.2px;color:#595959;-webkit-text-stroke:0.15px #595959;left:489.64px;top:237.00px;transform-origin:50% 50%;transform:translateX(-50%) scaleX(0.8950);">0%</span>
<span class="t " id="t149" style="font-size:7.4px;color:#595959;-webkit-text-stroke:0.15px #595959;left:489.94px;top:252.40px;transform-origin:0 0;transform:rotate(-90deg) translate(-100%,-50%);"><span style="display:inline-block;transform-origin:100% 50%;transform:scaleX(0.9418)">Roofing</span></span>
<span class="t " id="t150" style="font-size:7.2px;color:#595959;-webkit-text-stroke:0.15px #595959;left:500.45px;top:237.00px;transform-origin:50% 50%;transform:translateX(-50%) scaleX(0.8950);">0%</span>
<span class="t " id="t151" style="font-size:7.4px;color:#595959;-webkit-text-stroke:0.15px #595959;left:500.75px;top:249.80px;transform-origin:0 0;transform:rotate(-90deg) translate(-100%,-50%);"><span style="display:inline-block;transform-origin:100% 50%;transform:scaleX(0.9769)">Window wall and...</span></span>
<span class="t " id="t152" style="font-size:7.2px;color:#595959;-webkit-text-stroke:0.15px #595959;left:511.26px;top:237.00px;transform-origin:50% 50%;transform:translateX(-50%) scaleX(0.8950);">0%</span>
<span class="t " id="t153" style="font-size:7.4px;color:#595959;-webkit-text-stroke:0.15px #595959;left:511.56px;top:252.40px;transform-origin:0 0;transform:rotate(-90deg) translate(-100%,-50%);"><span style="display:inline-block;transform-origin:100% 50%;transform:scaleX(0.9432)">Building Finishes</span></span>
<span class="t " id="t154" style="font-size:7.2px;color:#595959;-webkit-text-stroke:0.15px #595959;left:522.07px;top:195.00px;transform-origin:50% 50%;transform:translateX(-50%) scaleX(0.9242);">51%</span>
<span class="t " id="t155" style="font-size:7.4px;color:#595959;-webkit-text-stroke:0.15px #595959;left:522.37px;top:252.40px;transform-origin:0 0;transform:rotate(-90deg) translate(-100%,-50%);"><span style="display:inline-block;transform-origin:100% 50%;transform:scaleX(0.9185)">Elevators</span></span>
<span class="t " id="t156" style="font-size:7.2px;color:#595959;-webkit-text-stroke:0.15px #595959;left:532.88px;top:237.00px;transform-origin:50% 50%;transform:translateX(-50%) scaleX(0.8950);">0%</span>
<span class="t " id="t157" style="font-size:7.4px;color:#595959;-webkit-text-stroke:0.15px #595959;left:533.18px;top:252.40px;transform-origin:0 0;transform:rotate(-90deg) translate(-100%,-50%);"><span style="display:inline-block;transform-origin:100% 50%;transform:scaleX(0.9314)">Plumbing</span></span>
<span class="t " id="t158" style="font-size:7.2px;color:#595959;-webkit-text-stroke:0.15px #595959;left:543.69px;top:237.00px;transform-origin:50% 50%;transform:translateX(-50%) scaleX(0.8950);">0%</span>
<span class="t " id="t159" style="font-size:7.4px;color:#595959;-webkit-text-stroke:0.15px #595959;left:543.99px;top:252.40px;transform-origin:0 0;transform:rotate(-90deg) translate(-100%,-50%);"><span style="display:inline-block;transform-origin:100% 50%;transform:scaleX(0.9238)">Electrical</span></span>
<span class="t " id="t160" style="font-size:7.2px;color:#595959;-webkit-text-stroke:0.15px #595959;left:554.50px;top:226.00px;transform-origin:50% 50%;transform:translateX(-50%) scaleX(0.9242);">13%</span>
<span class="t " id="t161" style="font-size:7.4px;color:#595959;-webkit-text-stroke:0.15px #595959;left:554.80px;top:249.80px;transform-origin:0 0;transform:rotate(-90deg) translate(-100%,-50%);"><span style="display:inline-block;transform-origin:100% 50%;transform:scaleX(0.9472)">Heating and...</span></span>
<span class="t " id="t162" style="font-size:7.2px;color:#595959;-webkit-text-stroke:0.15px #595959;left:565.31px;top:237.00px;transform-origin:50% 50%;transform:translateX(-50%) scaleX(0.8950);">0%</span>
<span class="t " id="t163" style="font-size:7.4px;color:#595959;-webkit-text-stroke:0.15px #595959;left:565.61px;top:249.80px;transform-origin:0 0;transform:rotate(-90deg) translate(-100%,-50%);"><span style="display:inline-block;transform-origin:100% 50%;transform:scaleX(0.9328)">Final Clean-up and...</span></span>
<span class="t " id="t164" style="font-size:7.2px;color:#595959;-webkit-text-stroke:0.15px #595959;left:576.12px;top:237.00px;transform-origin:50% 50%;transform:translateX(-50%) scaleX(0.8950);">0%</span>
<span class="t " id="t165" style="font-size:7.4px;color:#595959;-webkit-text-stroke:0.15px #595959;left:576.42px;top:249.80px;transform-origin:0 0;transform:rotate(-90deg) translate(-100%,-50%);"><span style="display:inline-block;transform-origin:100% 50%;transform:scaleX(0.9432)">Complete Final...</span></span>
<span class="t " id="t166" style="font-size:7.2px;color:#595959;-webkit-text-stroke:0.15px #595959;left:586.93px;top:237.00px;transform-origin:50% 50%;transform:translateX(-50%) scaleX(0.8950);">0%</span>
<span class="t " id="t167" style="font-size:7.4px;color:#595959;-webkit-text-stroke:0.15px #595959;left:587.23px;top:249.80px;transform-origin:0 0;transform:rotate(-90deg) translate(-100%,-50%);"><span style="display:inline-block;transform-origin:100% 50%;transform:scaleX(0.9708)">Complete punch list...</span></span>
<span class="t " id="t168" style="font-size:7.2px;color:#595959;-webkit-text-stroke:0.15px #595959;left:597.74px;top:237.00px;transform-origin:50% 50%;transform:translateX(-50%) scaleX(0.8950);">0%</span>
<span class="t " id="t169" style="font-size:7.4px;color:#595959;-webkit-text-stroke:0.15px #595959;left:598.04px;top:249.80px;transform-origin:0 0;transform:rotate(-90deg) translate(-100%,-50%);"><span style="display:inline-block;transform-origin:100% 50%;transform:scaleX(1.0022)">Obtain certificate of...</span></span>
<span class="t " id="t170" style="font-size:7.2px;color:#595959;-webkit-text-stroke:0.15px #595959;left:608.55px;top:237.00px;transform-origin:50% 50%;transform:translateX(-50%) scaleX(0.8950);">0%</span>
<span class="t " id="t171" style="font-size:7.4px;color:#595959;-webkit-text-stroke:0.15px #595959;left:608.85px;top:249.80px;transform-origin:0 0;transform:rotate(-90deg) translate(-100%,-50%);"><span style="display:inline-block;transform-origin:100% 50%;transform:scaleX(0.9306)">Issue final...</span></span>
<span class="t " id="t172" style="font-size:7.2px;color:#595959;-webkit-text-stroke:0.15px #595959;left:619.36px;top:237.00px;transform-origin:50% 50%;transform:translateX(-50%) scaleX(0.8950);">0%</span>
<span class="t " id="t173" style="font-size:7.4px;color:#595959;-webkit-text-stroke:0.15px #595959;left:619.66px;top:249.80px;transform-origin:0 0;transform:rotate(-90deg) translate(-100%,-50%);"><span style="display:inline-block;transform-origin:100% 50%;transform:scaleX(0.9788)">Issue final request for...</span></span>
<span class="t " id="t174" style="font-size:7.9px;color:#2e7d32;font-weight:700;left:8.60px;top:348.00px;transform-origin:0 0;transform:rotate(-90deg) translate(-100%,-50%);"><span style="display:inline-block;transform-origin:100% 50%;transform:scaleX(0.9895)">PROJECT OVERVIEW</span></span>
<span class="t " id="t175" style="font-size:7.9px;color:#383838;left:5.00px;top:686.00px;transform-origin:0 50%;transform:scaleX(0.8767);">Ready</span>
<span class="t " id="t176" style="font-size:7.9px;color:#383838;left:59.25px;top:686.00px;transform-origin:0 50%;transform:scaleX(0.9512);">New Tasks : Auto Scheduled</span>
</div>
</div>
</body>
</html>
